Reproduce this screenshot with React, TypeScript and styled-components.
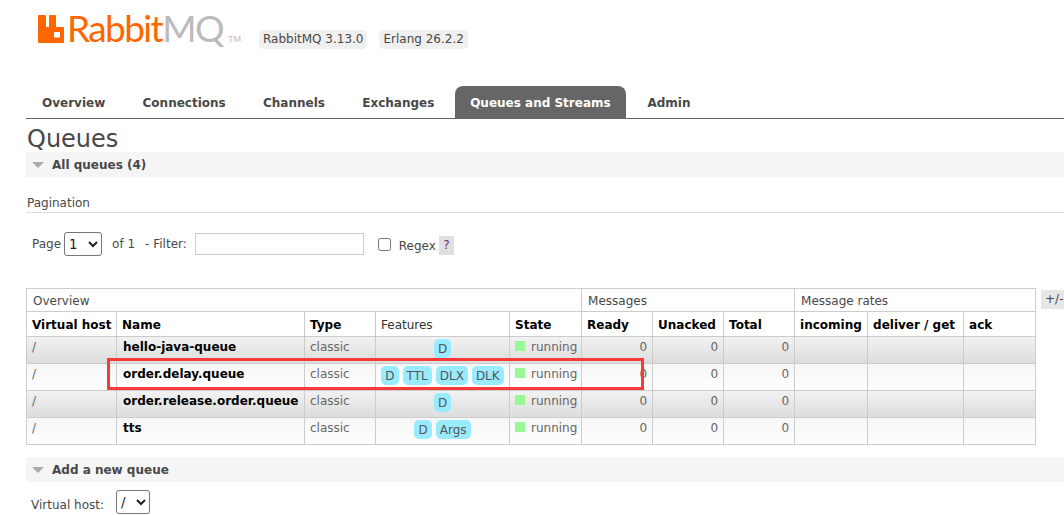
// App.tsx
import styled, { createGlobalStyle } from 'styled-components';

const GlobalStyle = createGlobalStyle`
  html, body {
    margin: 0;
    padding: 0;
    width: 1064px;
    height: 515px;
    overflow: hidden;
    background: #fff;
  }
  body {
    font-family: "DejaVu Sans", Verdana, sans-serif;
    font-size: 12px;
    color: #484848;
  }
`;

const Page = styled.div`
  width: 1064px;
  height: 515px;
  overflow: hidden;
`;

const Header = styled.header`
  display: flex;
  align-items: flex-start;
  height: 86px;
  padding-left: 38px;
  box-sizing: border-box;
`;

const Logo = styled.div`
  display: flex;
  align-items: flex-start;
  width: 221px;
  padding-top: 15px;
  flex: none;
`;

const LogoWord = styled.span`
  font-family: "Lato", "Liberation Sans", sans-serif;
  font-weight: 400;
  font-size: 37px;
  line-height: 25px;
  margin-left: 3px;
  color: #ff6600;
  letter-spacing: -1.6px;
`;

const LogoGrey = styled.span`
  color: #bbbbbb;
`;

const LogoMark = styled.span`
  font-family: "Liberation Sans", sans-serif;
  font-size: 9px;
  color: #bbb;
  margin: 19px 0 0 5px;
`;

const Versions = styled.div`
  display: flex;
  gap: 12px;
  padding-top: 30px;
`;

const VersionPill = styled.span`
  background: #f0f0f0;
  border-radius: 5px;
  height: 19px;
  line-height: 19px;
  padding: 0 4px;
  color: #484848;
`;

const Nav = styled.nav`
  display: flex;
  height: 32px;
  margin-left: 26px;
  border-bottom: 1px solid #666;
`;

const Tab = styled.a<{ $active?: boolean }>`
  display: block;
  font-weight: bold;
  font-size: 12px;
  line-height: 34px;
  height: 32px;
  padding: 0 ${({ $active }) => ($active ? '15.5px' : '16px')};
  margin-left: ${({ $active }) => ($active ? '-1px' : '0')};
  margin-right: 5.3px;
  border-radius: 8px 8px 0 0;
  color: ${({ $active }) => ($active ? '#fff' : '#484848')};
  background: ${({ $active }) => ($active ? '#666' : 'transparent')};
`;

const Main = styled.main`
  padding-left: 26px;
`;

const Title = styled.h1`
  margin: 0;
  padding-left: 1px;
  font-size: 24px;
  font-weight: normal;
  line-height: 41px;
  height: 33px;
  color: #484848;
`;

const SectionBar = styled.h2`
  display: flex;
  align-items: center;
  margin: 0;
  height: 25px;
  background: #f5f5f5;
  font-size: 12px;
  font-weight: bold;
  color: #484848;
`;

const Arrow = styled.span`
  width: 0;
  height: 0;
  margin: 0 8px 0 6px;
  border-left: 6px solid transparent;
  border-right: 6px solid transparent;
  border-top: 6px solid #aaa;
`;

const PaginationLabel = styled.h3`
  margin: 18px 0 0;
  padding: 0 0 2px 1px;
  height: 15px;
  line-height: 17px;
  font-size: 12px;
  font-weight: normal;
  border-bottom: 1px solid #ddd;
`;

const FilterRow = styled.div`
  display: flex;
  align-items: center;
  height: 26px;
  margin-top: 18px;
  padding-left: 6px;
`;

const FilterText = styled.span<{ $gap?: number }>`
  margin-left: ${({ $gap }) => $gap ?? 0}px;
`;

const NativeSelect = styled.select<{ $w: number }>`
  width: ${({ $w }) => $w}px;
  height: 24px;
  margin: 0;
  font-family: inherit;
  font-size: 13.3px;
  color: #222;
  background: #fff;
  border: 1px solid #767676;
  border-radius: 3px;
`;

const FilterInput = styled.input`
  width: 169px;
  height: 22px;
  box-sizing: border-box;
  margin-left: 8px;
  padding: 0 2px;
  background: #fff;
  border: 1px solid #ccc;
  outline: none;
`;

const Check = styled.input`
  width: 13px;
  height: 13px;
  margin: 0 0 0 14px;
`;

const HelpIcon = styled.span`
  display: inline-block;
  width: 15px;
  height: 19px;
  margin: 3px 0 0 3px;
  line-height: 19px;
  text-align: center;
  background: #e0e0e0;
  color: #6a2a7a;
`;

const RegexLabel = styled.span`
  margin: 4px 0 0 8px;
`;

const TableRow = styled.div`
  position: relative;
  display: flex;
  align-items: flex-start;
  gap: 5px;
  margin-top: 31px;
`;

const Table = styled.table`
  flex: none;
  width: 1009px;
  table-layout: fixed;
  border-collapse: collapse;
  background: #fff;
`;

const GroupCell = styled.th`
  height: 21px;
  padding: 1px 6px 0;
  font-weight: normal;
  text-align: left;
  border: 1px solid #ccc;
  color: #484848;
`;

const HeadCell = styled.th<{ $plain?: boolean }>`
  height: 23px;
  padding: 1px 5px 0;
  text-align: left;
  white-space: nowrap;
  border: 1px solid #ccc;
  color: ${({ $plain }) => ($plain ? '#333' : '#000')};
  font-size: 12px;
  font-weight: ${({ $plain }) => ($plain ? 'normal' : 'bold')};
`;

const Row = styled.tr<{ $alt: boolean }>`
  background: ${({ $alt }) =>
    $alt
      ? 'linear-gradient(to bottom, #f2f2f2, #dcdcdc)'
      : 'linear-gradient(to bottom, #f6f6f6, #ffffff)'};
`;

const Cell = styled.td`
  padding: 3px 5px 0;
  height: 23px;
  vertical-align: top;
  border: 1px solid #ccc;
  color: #666;
  white-space: nowrap;
`;

const NameCell = styled(Cell)`
  padding-left: 6px;
  font-size: 12px;
  font-weight: bold;
  color: #000;
`;

const NumCell = styled(Cell)`
  text-align: right;
`;

const FeatureCell = styled(Cell)`
  padding: 2px 0 0;
  text-align: center;
`;

const Feature = styled.abbr`
  display: inline-block;
  vertical-align: top;
  height: 19px;
  line-height: 21px;
  margin: 0 2px;
  padding: 0 4px;
  border-radius: 5px;
  background: #99ebff;
  color: #555;
  text-decoration: none;
`;

const StateDot = styled.span`
  display: inline-block;
  width: 10px;
  height: 10px;
  margin-right: 6px;
  background: #98f898;
`;

const ColumnsToggle = styled.span`
  flex: none;
  width: 30px;
  height: 19px;
  margin-top: 2px;
  padding-left: 4px;
  line-height: 19px;
  background: #e6e6e6;
`;

const Highlight = styled.div`
  position: absolute;
  left: 81px;
  top: 70px;
  width: 531px;
  height: 26px;
  border: 3px solid #f63a3a;
  pointer-events: none;
`;

const AddBar = styled(SectionBar)`
  margin-top: 12px;
`;

const VhostRow = styled.div`
  display: flex;
  align-items: center;
  gap: 12px;
  margin-top: 8px;
  padding-left: 5px;
`;

const VhostLabel = styled.span`
  margin-top: 6px;
`;

const columns = [90, 188, 71, 134, 72, 71, 71, 71, 73, 96, 72];

const queues = [
  { name: 'hello-java-queue', features: ['D'] },
  { name: 'order.delay.queue', features: ['D', 'TTL', 'DLX', 'DLK'] },
  { name: 'order.release.order.queue', features: ['D'] },
  { name: 'tts', features: ['D', 'Args'] },
];

const tabs = ['Overview', 'Connections', 'Channels', 'Exchanges', 'Queues and Streams', 'Admin'];

function RabbitIcon() {
  return (
    <svg width="26" height="28" viewBox="0 0 26 28" style={{ flex: 'none' }}>
      <path
        fill="#ff6600"
        fillRule="evenodd"
        d="M1 0h6a1 1 0 0 1 1 1v11h3V1a1 1 0 0 1 1-1h5a1 1 0 0 1 1 1v11h7a1 1 0 0 1 1 1v14a1 1 0 0 1-1 1H1a1 1 0 0 1-1-1V1a1 1 0 0 1 1-1zM16 17v5.500h6V17z"
      />
    </svg>
  );
}

export default function App() {
  return (
    <Page>
      <GlobalStyle />
      <Header>
        <Logo>
          <RabbitIcon />
          <LogoWord>
            Rabbit<LogoGrey>MQ</LogoGrey>
          </LogoWord>
          <LogoMark>TM</LogoMark>
        </Logo>
        <Versions>
          <VersionPill>RabbitMQ 3.13.0</VersionPill>
          <VersionPill>Erlang 26.2.2</VersionPill>
        </Versions>
      </Header>
      <Nav>
        {tabs.map(tab => (
          <Tab key={tab} $active={tab === 'Queues and Streams'}>
            {tab}
          </Tab>
        ))}
      </Nav>
      <Main>
        <Title>Queues</Title>
        <SectionBar>
          <Arrow />
          All queues (4)
        </SectionBar>
        <PaginationLabel>Pagination</PaginationLabel>
        <FilterRow>
          <span>Page</span>
          <FilterText $gap={3}>
            <NativeSelect $w={38} defaultValue="1">
              <option>1</option>
            </NativeSelect>
          </FilterText>
          <FilterText $gap={10}>of 1</FilterText>
          <FilterText $gap={10}>- Filter:</FilterText>
          <FilterInput />
          <Check type="checkbox" />
          <RegexLabel>Regex</RegexLabel>
          <HelpIcon>?</HelpIcon>
        </FilterRow>
        <TableRow>
          <Table>
            <colgroup>
              {columns.map((w, i) => (
                <col key={i} width={w} />
              ))}
            </colgroup>
            <thead>
              <tr>
                <GroupCell colSpan={5}>Overview</GroupCell>
                <GroupCell colSpan={3}>Messages</GroupCell>
                <GroupCell colSpan={3}>Message rates</GroupCell>
              </tr>
              <tr>
                <HeadCell>Virtual host</HeadCell>
                <HeadCell>Name</HeadCell>
                <HeadCell>Type</HeadCell>
                <HeadCell $plain>Features</HeadCell>
                <HeadCell>State</HeadCell>
                <HeadCell>Ready</HeadCell>
                <HeadCell>Unacked</HeadCell>
                <HeadCell>Total</HeadCell>
                <HeadCell>incoming</HeadCell>
                <HeadCell>deliver / get</HeadCell>
                <HeadCell>ack</HeadCell>
              </tr>
            </thead>
            <tbody>
              {queues.map((q, i) => (
                <Row key={q.name} $alt={i % 2 === 0}>
                  <Cell>/</Cell>
                  <NameCell>{q.name}</NameCell>
                  <Cell>classic</Cell>
                  <FeatureCell>
                    {q.features.map(f => (
                      <Feature key={f}>{f}</Feature>
                    ))}
                  </FeatureCell>
                  <Cell>
                    <StateDot />
                    running
                  </Cell>
                  <NumCell>0</NumCell>
                  <NumCell>0</NumCell>
                  <NumCell>0</NumCell>
                  <Cell />
                  <Cell />
                  <Cell />
                </Row>
              ))}
            </tbody>
          </Table>
          <ColumnsToggle>+/-</ColumnsToggle>
          <Highlight />
        </TableRow>
        <AddBar>
          <Arrow />
          Add a new queue
        </AddBar>
        <VhostRow>
          <VhostLabel>Virtual host:</VhostLabel>
          <NativeSelect $w={34} defaultValue="/">
            <option>/</option>
          </NativeSelect>
        </VhostRow>
      </Main>
    </Page>
  );
}
